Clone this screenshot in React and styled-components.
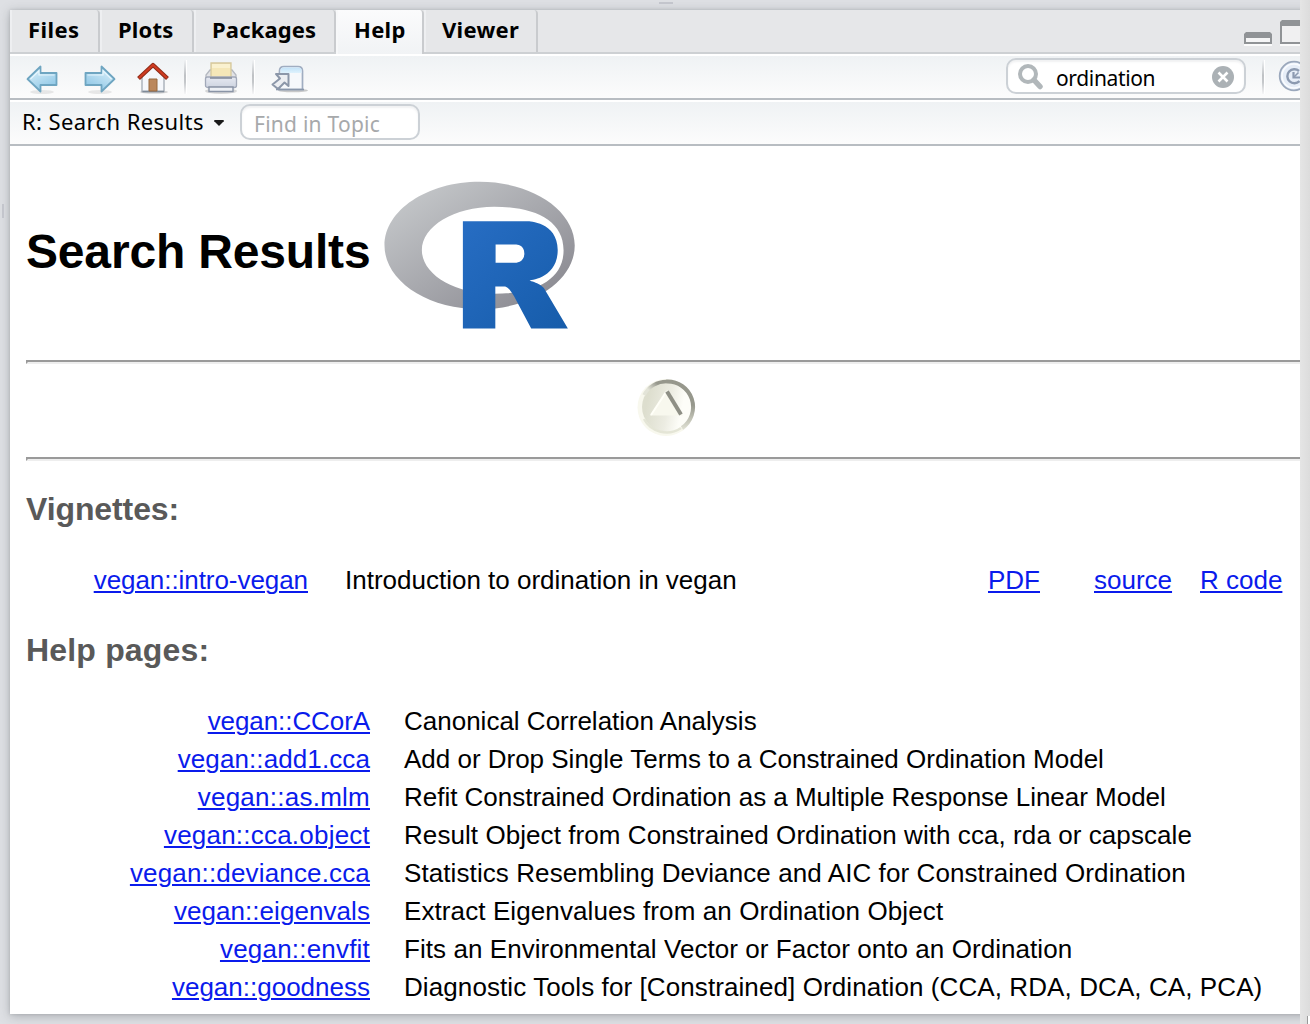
import React from "react";
import styled, { createGlobalStyle } from "styled-components";

const Global = createGlobalStyle`
  * { box-sizing: border-box; }
  html, body { margin: 0; padding: 0; }
  body { background: #dee0e4; overflow: hidden; }
`;

const uiFont = `"Noto Sans", "Open Sans", sans-serif`;
const docFont = `"Liberation Sans", Arial, sans-serif`;

const Screen = styled.div`
  position: relative;
  display: grid;
  grid-template-columns: 1300px 10px;
  width: 1310px;
  height: 1024px;
  overflow: hidden;
  background: #dee0e4;
`;

const Workspace = styled.div`
  overflow: hidden;
  padding: 10px 0 10px 10px;
`;

const Pane = styled.section`
  display: flex;
  flex-direction: column;
  width: 1330px;
  height: 1004px;
  background: #fff;
  box-shadow: 0 0 3px rgba(90, 94, 100, 0.2), 0 2px 10px rgba(70, 74, 80, 0.34);
`;

const Edge = styled.div`
  background: linear-gradient(90deg, #e5e5e5, #dcdcdc);
`;

const Corner = styled.span`
  position: absolute;
  right: 0;
  bottom: 0;
  width: 3px;
  height: 8px;
  background: #fff;
  border-left: 1px solid #9a9a9a;
`;

const Grip = styled.span`
  position: absolute;
  left: ${(p) => p.$x}px;
  top: ${(p) => p.$y}px;
  width: ${(p) => p.$w}px;
  height: ${(p) => p.$h}px;
  background: #c3c5cc;
`;

const TabBar = styled.nav`
  display: flex;
  flex: none;
  width: 1290px;
  height: 44px;
  background: linear-gradient(#e6e7e9 42px, #cdd0d3 42px);
`;

const Tab = styled.div`
  flex: none;
  width: ${(p) => p.$w}px;
  height: ${(p) => (p.$active ? 44 : 42)}px;
  padding-left: 18px;
  border-right: 2px solid #c9cbce;
  border-top-right-radius: 4px;
  box-shadow: inset 2px 0 0 ${(p) => (p.$active ? "#f7f8f9" : "#eeeff1")};
  background: ${(p) => (p.$active ? "linear-gradient(#fbfbfc, #f1f3f5)" : "#e6e7e9")};
  font: 700 22px/38px ${uiFont};
  letter-spacing: ${(p) => p.$ls || 0}px;
  color: #000;
  white-space: nowrap;
`;

const WindowButtons = styled.div`
  margin-left: auto;
  width: 66px;
  height: 42px;
  overflow: hidden;
`;

const Toolbar = styled.div`
  display: flex;
  align-items: center;
  flex: none;
  width: 1290px;
  height: ${(p) => p.$h}px;
  border-top: 2px solid #fff;
  border-bottom: 2px solid #b8bdc2;
  background: linear-gradient(#eff2f4, #fcfcfc);
  overflow: hidden;
`;

const ToolButton = styled.span`
  display: flex;
  flex: none;
  width: ${(p) => p.$w}px;
  margin-left: ${(p) => p.$gap}px;
  padding-top: ${(p) => p.$drop || 0}px;
  padding-bottom: ${(p) => p.$lift || 0}px;
`;

const Divider = styled.span`
  flex: none;
  width: 3px;
  height: 34px;
  margin-left: ${(p) => p.$gap}px;
  border-right: 1px solid #fff;
  background: linear-gradient(#f0f2f4, #bfc2c5 45%, #c4c7ca 65%, #f6f6f7);
`;

const Field = styled.div`
  display: flex;
  align-items: center;
  flex: none;
  width: ${(p) => p.$w}px;
  height: 36px;
  margin: 0 0 2px ${(p) => p.$gap}px;
  padding: 0 ${(p) => p.$end || 10}px 0 ${(p) => p.$pad}px;
  border: 2px solid #ccd1d6;
  border-radius: 10px;
  background: #fff;
  box-shadow: inset 0 2px 2px rgba(110, 120, 130, 0.1);
`;

const FieldText = styled.span`
  flex: 1;
  padding: ${(p) => p.$drop}px 0 0 ${(p) => p.$indent || 0}px;
  font: 400 21px/28px ${uiFont};
  letter-spacing: ${(p) => p.$ls}px;
  color: ${(p) => (p.$hint ? "#a7a9ab" : "#000")};
  white-space: nowrap;
`;

const TopicMenu = styled.div`
  display: flex;
  align-items: center;
  flex: none;
  width: 203px;
  margin-left: 12px;
`;

const TopicLabel = styled.span`
  width: 192px;
  padding-bottom: 5px;
  font: 400 22px/30px ${uiFont};
  letter-spacing: 0.4px;
  color: #000;
  white-space: nowrap;
`;

const Doc = styled.main`
  width: 1320px;
  padding: 34px 0 0 16px;
  font: 400 26px/38px ${docFont};
  color: #000;
`;

const TitleRow = styled.header`
  display: grid;
  grid-template-columns: 358px 192px;
  height: 180px;
`;

const Title = styled.h1`
  margin: 44px 0 0;
  font: 700 48px/56px ${docFont};
  letter-spacing: -0.17px;
  white-space: nowrap;
`;

const LogoBox = styled.div`
  padding-top: 0.5px;
`;

const Rule = styled.hr`
  height: 4px;
  margin: 0;
  border: 2px solid;
  border-color: #9a9a9a #eee #eee #9a9a9a;
`;

const UpLink = styled.div`
  display: flex;
  justify-content: center;
  width: 1279px;
  height: 93px;
  padding-top: 13px;
`;

const Heading = styled.h3`
  margin: ${(p) => p.$top}px 0 ${(p) => p.$bottom}px;
  font: 700 32px/38px ${docFont};
  letter-spacing: ${(p) => p.$ls}px;
  color: #595959;
`;

const VignetteRow = styled.div`
  display: grid;
  grid-template-columns: 282px 37px 643px 106px 106px 90px;
  height: 38px;
  white-space: nowrap;
`;

const TopicRow = styled.div`
  display: grid;
  grid-template-columns: 344px 1fr;
  column-gap: 34px;
  height: 38px;
  white-space: nowrap;
`;

const Cell = styled.span`
  text-align: ${(p) => (p.$right ? "right" : "left")};
  letter-spacing: ${(p) => p.$ls || 0}px;
`;

const Link = styled.a`
  color: #0a1bec;
  text-decoration: underline;
  text-decoration-thickness: 1.5px;
  text-underline-offset: 2px;
  cursor: pointer;
`;

const Arrow = ({ flip }) => (
  <svg width="34" height="32" viewBox="0 0 34 32">
    <defs>
      <linearGradient id={flip ? "arrowR" : "arrowL"} x1="0" y1="0" x2="0.6" y2="1">
        <stop offset="0" stopColor="#e4f5fc" />
        <stop offset="1" stopColor="#8fc7e6" />
      </linearGradient>
    </defs>
    <ellipse cx="17" cy="29" rx="12" ry="2" fill="#000" opacity=".08" />
    <g transform={flip ? "translate(34 0) scale(-1 1)" : undefined}>
      <path d="M2.500 16 15.500 3.5V10H31.500V22H15.500V28.5Z" fill={`url(#${flip ? "arrowR" : "arrowL"})`} stroke="#6ea5c1" strokeWidth="1.8" strokeLinejoin="round" />
      <path d="M5.500 16 14 7.8V12H29.500" fill="none" stroke="#effaff" strokeWidth="1.2" opacity=".8" />
    </g>
  </svg>
);

const Home = () => (
  <svg width="34" height="34" viewBox="0 0 34 34">
    <ellipse cx="18" cy="31" rx="14" ry="1.8" fill="#000" opacity=".15" />
    <path d="M6 15 17 5 28 15V30.5H6Z" fill="#f5f7fb" stroke="#a9b0b9" strokeWidth="1.4" />
    <path d="M6.5 30.5H28" stroke="#7f8b98" strokeWidth="1.6" />
    <path d="M13 18H21V30H13Z" fill="#bb875c" stroke="#97683f" strokeWidth="1" />
    <path d="M2.5 17.5 17 4 31.500 17.500" fill="none" stroke="#8d2c18" strokeWidth="4.2" strokeLinejoin="round" />
    <path d="M3 17 17 4 31 17" fill="none" stroke="#cf3b21" strokeWidth="2.2" />
  </svg>
);

const Printer = () => (
  <svg width="36" height="34" viewBox="0 0 36 34">
    <defs>
      <linearGradient id="printerBody" x1="0" y1="0" x2="0" y2="1">
        <stop offset="0" stopColor="#e6e9f2" />
        <stop offset="1" stopColor="#ced4e0" />
      </linearGradient>
    </defs>
    <ellipse cx="18" cy="30" rx="16" ry="3" fill="#000" opacity=".14" />
    <path d="M7 9H29L33 14V25H3V14Z" fill="#e2e3e6" stroke="#b4b8c0" strokeWidth="1.3" />
    <path d="M8 2H28V17H8Z" fill="#f5e7b8" stroke="#d5c89d" strokeWidth="1.3" />
    <path d="M9 3H27V7H9Z" fill="#faf1cf" />
    <rect x="2.500" y="16" width="31" height="10.500" rx="2" fill="url(#printerBody)" stroke="#a2a9b9" strokeWidth="1.3" />
    <path d="M7 17H29" stroke="#858d9b" strokeWidth="1.6" />
    <path d="M6 26H30V30.500H6Z" fill="#edf0f5" stroke="#8a94a6" strokeWidth="1.4" />
  </svg>
);

const Popout = () => (
  <svg width="38" height="30" viewBox="0 0 38 30">
    <defs>
      <linearGradient id="popBar" x1="0" y1="0" x2="0" y2="1">
        <stop offset="0" stopColor="#c2e2f8" />
        <stop offset="1" stopColor="#dff2fd" />
      </linearGradient>
    </defs>
    <ellipse cx="22" cy="26.500" rx="15" ry="1.8" fill="#000" opacity=".2" />
    <path d="M8.500 25.500V7Q8.500 2.500 13 2.500H27Q31.500 2.500 31.500 7V25.500Z" fill="#f6f8fb" stroke="#a0adc1" strokeWidth="1.7" />
    <path d="M9.500 9V6Q9.500 3.500 13 3.500H27Q30.500 3.500 30.500 6V9Z" fill="url(#popBar)" />
    <path d="M5 10H17.500V22L13.500 18.500 7 25 1.500 20.500 9 14.500Z" fill="#eceef2" stroke="#8c97a9" strokeWidth="2" strokeLinejoin="round" />
    <path d="M5 25.500H33" stroke="#8996aa" strokeWidth="1.6" />
  </svg>
);

const Magnifier = () => (
  <svg width="28" height="28" viewBox="0 0 28 28">
    <circle cx="12" cy="12" r="8" fill="none" stroke="#b1b7ba" strokeWidth="4" />
    <path d="M18 18 24 24.500" stroke="#b1b7ba" strokeWidth="5.500" strokeLinecap="round" />
  </svg>
);

const Clear = () => (
  <svg width="22" height="24" viewBox="0 -2 22 24">
    <circle cx="11" cy="11" r="11" fill="#abb1b5" />
    <path d="M6.500 6.500 15.500 15.500M15.500 6.500 6.500 15.500" stroke="#fff" strokeWidth="2.6" />
  </svg>
);

const Refresh = () => (
  <svg width="32" height="32" viewBox="0 0 32 32">
    <circle cx="16" cy="16" r="14.300" fill="#e7eef8" stroke="#9ba8bc" strokeWidth="1.800" />
    <circle cx="16" cy="16" r="12" fill="none" stroke="#fafcff" strokeWidth="1.500" />
    <path d="M21 11A7 7 0 1 0 21.500 21" fill="none" stroke="#8c9ab1" strokeWidth="2.400" />
    <path d="M15.500 12V17.500H22" fill="none" stroke="#8c9ab1" strokeWidth="2.200" />
    <path d="M16 17 20.500 12.500" stroke="#8c9ab1" strokeWidth="1.600" />
  </svg>
);

const PaneControls = () => (
  <svg width="66" height="42" viewBox="0 0 66 42">
    <path d="M10 35H38M46 35H66" stroke="#fafafa" strokeWidth="2" />
    <path d="M12 22H36L38 24V34H10V24Z" fill="#909396" />
    <path d="M12 28H36V32H12Z" fill="#f5f5f6" />
    <path d="M48 10H66V34H46V12Z" fill="#909396" />
    <path d="M48 16H66V32H48Z" fill="#f0f0f1" />
  </svg>
);

const RLogo = () => (
  <svg width="191" height="148" viewBox="-1 0 724 561" preserveAspectRatio="xMinYMin">
    <defs>
      <linearGradient id="ring" x1="0" y1="0" x2="1" y2="1">
        <stop offset="0" stopColor="#cbced0" />
        <stop offset="1" stopColor="#84838b" />
      </linearGradient>
      <linearGradient id="letter" x1="0" y1="0" x2="1" y2="1">
        <stop offset="0" stopColor="#276dc3" />
        <stop offset="1" stopColor="#165caa" />
      </linearGradient>
    </defs>
    <path fill="url(#ring)" fillRule="evenodd" d="M361.453,485.937C162.329,485.937.906,377.828.906,244.469C.906,111.109 162.329,3 361.453,3C560.578,3 722,111.109 722,244.469C722,377.828 560.578,485.937 361.453,485.937ZM416.641,97.406C265.289,97.406 142.594,171.314 142.594,262.484C142.594,353.654 265.289,427.562 416.641,427.562C567.992,427.562 679.687,377.033 679.687,262.484C679.687,147.971 567.992,97.406 416.641,97.406Z" />
    <path fill="url(#letter)" fillRule="evenodd" d="M550,377C550,377 571.822,383.585 584.5,390C588.899,392.226 596.51,396.668 602,402.5C607.378,408.212 610,414 610,414L696,559L557,559.062L492,437C492,437 478.69,414.131 470.5,407.5C463.668,401.969 460.755,400 454,400L420.974,400L421,558.974L298,559.026L298,152.938L545,152.938C545,152.938 657.5,154.967 657.5,262C657.5,369.033 550,377 550,377ZM496.5,241.024L422.037,240.976L422,310.026L496.5,310.002C496.5,310.002 531,309.895 531,274.877C531,239.155 496.5,241.024 496.5,241.024Z" />
  </svg>
);

const UpButton = () => (
  <svg width="62" height="62" viewBox="0 0 62 62">
    <defs>
      <linearGradient id="face" x1="0.1" y1="0.4" x2="0.8" y2="0.55">
        <stop offset="0" stopColor="#dddece" />
        <stop offset="0.6" stopColor="#ecece2" />
        <stop offset="1" stopColor="#fdfdf8" />
      </linearGradient>
      <linearGradient id="rimDark" x1="0" y1="0.3" x2="0.5" y2="0">
        <stop offset="0" stopColor="#e3e4d8" />
        <stop offset="1" stopColor="#96978c" />
      </linearGradient>
      <linearGradient id="rimFade" x1="0" y1="0" x2="0" y2="1">
        <stop offset="0" stopColor="#96978c" />
        <stop offset="0.5" stopColor="#96978c" />
        <stop offset="1" stopColor="#dcddd0" />
      </linearGradient>
    </defs>
    <circle cx="31" cy="30.500" r="28.500" fill="#f8f8ee" />
    <circle cx="32" cy="30" r="25" fill="url(#face)" />
    <path d="M9 42A25.500 25.500 0 0 0 46 51" fill="none" stroke="#e4e5d6" strokeWidth="2.500" />
    <path d="M9 18A25.500 25.500 0 0 1 32 4.500" fill="none" stroke="url(#rimDark)" strokeWidth="3.600" />
    <path d="M31.500 4.500A25.500 25.500 0 0 1 47 51" fill="none" stroke="url(#rimFade)" strokeWidth="4" />
    <path d="M32 13 48 38.500H15Z" fill="#f8f8ee" />
    <path d="M16 38 31 15" stroke="#fffff8" strokeWidth="2" />
    <path d="M32 14.500 46 37.500" stroke="#8e8f85" strokeWidth="4" />
  </svg>
);

const tabs = [
  { label: "Files", w: 90, ls: 0.4 },
  { label: "Plots", w: 94, ls: 0.2 },
  { label: "Packages", w: 142, ls: 0.15 },
  { label: "Help", w: 88, ls: 0.3, active: true },
  { label: "Viewer", w: 114, ls: 0.3 },
];

const topics = [
  ["vegan::CCorA", "Canonical Correlation Analysis", -0.08, 0],
  ["vegan::add1.cca", "Add or Drop Single Terms to a Constrained Ordination Model", 0.1, -0.01],
  ["vegan::as.mlm", "Refit Constrained Ordination as a Multiple Response Linear Model", 0.25, -0.02],
  ["vegan::cca.object", "Result Object from Constrained Ordination with cca, rda or capscale", 0.22, 0.07],
  ["vegan::deviance.cca", "Statistics Resembling Deviance and AIC for Constrained Ordination", 0.16, 0.09],
  ["vegan::eigenvals", "Extract Eigenvalues from an Ordination Object", 0.06, 0.1],
  ["vegan::envfit", "Fits an Environmental Vector or Factor onto an Ordination", 0.2, 0.06],
  ["vegan::goodness", "Diagnostic Tools for [Constrained] Ordination (CCA, RDA, DCA, CA, PCA)", 0, 0.09],
];

export default function App() {
  return (
    <Screen>
      <Global />
      <Workspace>
        <Pane>
          <TabBar>
            {tabs.map((t) => (
              <Tab key={t.label} $w={t.w} $active={t.active} $ls={t.ls}>{t.label}</Tab>
            ))}
            <WindowButtons><PaneControls /></WindowButtons>
          </TabBar>
          <Toolbar $h={46}>
            <ToolButton $w={34} $gap={15} $drop={4}><Arrow /></ToolButton>
            <ToolButton $w={34} $gap={24} $drop={4}><Arrow flip /></ToolButton>
            <ToolButton $w={34} $gap={19} $drop={1}><Home /></ToolButton>
            <Divider $gap={14} />
            <ToolButton $w={36} $gap={16} $drop={1}><Printer /></ToolButton>
            <Divider $gap={13} />
            <ToolButton $w={38} $gap={16} $drop={3}><Popout /></ToolButton>
            <Field $w={240} $gap={697} $pad={8}>
              <Magnifier />
              <FieldText $drop={3} $ls={-0.35} $indent={12}>ordination</FieldText>
              <Clear />
            </Field>
            <Divider $gap={16} />
            <ToolButton $w={32} $gap={13} $lift={2}><Refresh /></ToolButton>
          </Toolbar>
          <Toolbar $h={46}>
            <TopicMenu>
              <TopicLabel>R: Search Results</TopicLabel>
              <svg width="10" height="6" viewBox="0 0 11 7"><path d="M0 0H11V1.500L5.500 7 0 1.500Z" fill="#1a1a1a" /></svg>
            </TopicMenu>
            <Field $w={180} $gap={15} $pad={12}>
              <FieldText $drop={3} $ls={0.25} $hint>Find in Topic</FieldText>
            </Field>
          </Toolbar>
          <Doc>
            <TitleRow>
              <Title>Search Results</Title>
              <LogoBox><RLogo /></LogoBox>
            </TitleRow>
            <Rule />
            <UpLink><UpButton /></UpLink>
            <Rule />
            <Heading $top={29} $bottom={33} $ls={-0.1}>Vignettes:</Heading>
            <VignetteRow>
              <Cell $right $ls={-0.06}><Link>vegan::intro-vegan</Link></Cell>
              <span />
              <Cell>Introduction to ordination in vegan</Cell>
              <Cell><Link>PDF</Link></Cell>
              <Cell><Link>source</Link></Cell>
              <Cell><Link>R code</Link></Cell>
            </VignetteRow>
            <Heading $top={32} $bottom={33} $ls={0.18}>Help pages:</Heading>
            {topics.map(([name, text, nameSpacing, textSpacing]) => (
              <TopicRow key={name}>
                <Cell $right $ls={nameSpacing}><Link>{name}</Link></Cell>
                <Cell $ls={textSpacing}>{text}</Cell>
              </TopicRow>
            ))}
          </Doc>
        </Pane>
      </Workspace>
      <Edge />
      <Grip $x={659} $y={2} $w={14} $h={2} />
      <Grip $x={2} $y={204} $w={2} $h={14} />
      <Corner />
    </Screen>
  );
}
